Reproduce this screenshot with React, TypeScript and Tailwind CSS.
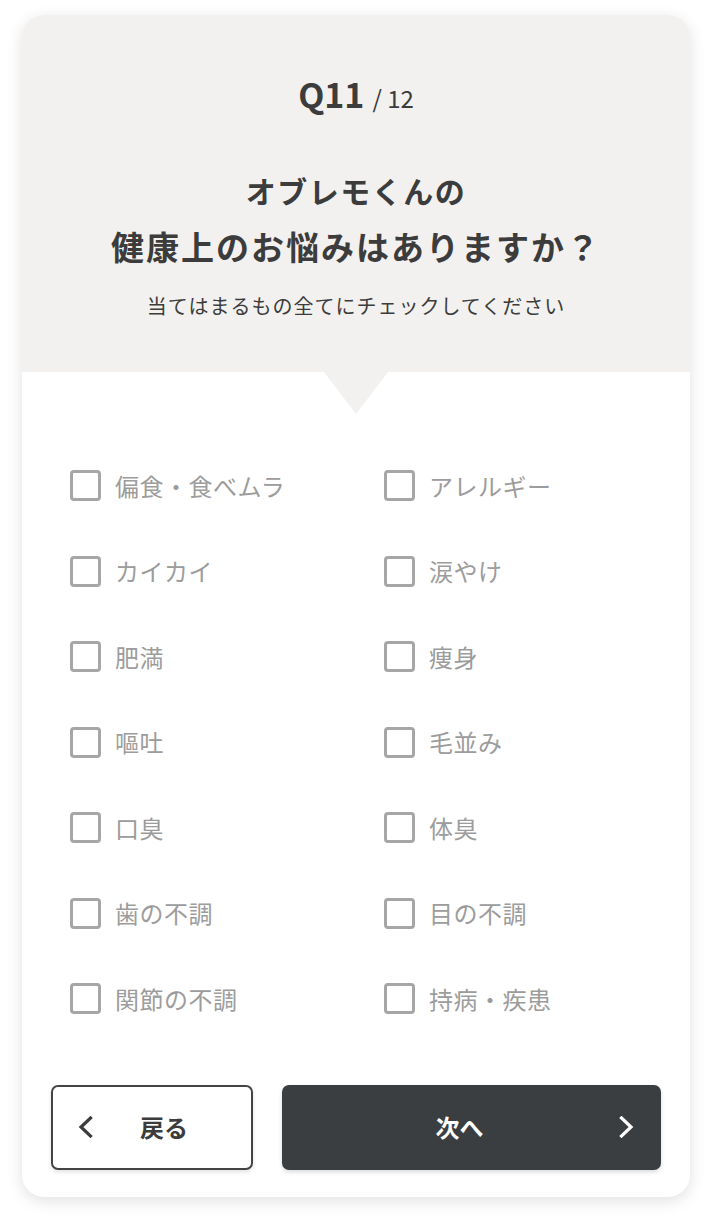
const options = [
  ["偏食・食べムラ", "アレルギー"],
  ["カイカイ", "涙やけ"],
  ["肥満", "痩身"],
  ["嘔吐", "毛並み"],
  ["口臭", "体臭"],
  ["歯の不調", "目の不調"],
  ["関節の不調", "持病・疾患"],
];

const font = { fontFamily: '"Noto Sans CJK JP", "Noto Sans", sans-serif' };

const Chevron = ({ dir }: { dir: "left" | "right" }) => (
  <svg width="15" height="22" viewBox="0 0 15 22" fill="none" className="shrink-0">
    <polyline
      points={dir === "left" ? "12.5,2 3,11 12.5,20" : "2.5,2 12,11 2.5,20"}
      stroke="currentColor"
      strokeWidth="3.2"
      strokeLinecap="square"
    />
  </svg>
);

const Check = ({ label }: { label: string }) => (
  <label className="flex items-center gap-[14px] h-[85.5px] cursor-pointer">
    <span className="w-[31px] h-[31px] border-[3px] border-[#a6a6a6] rounded-[4px] bg-white shrink-0" />
    <span className="text-[24px] text-[#9c9c9c] tracking-[0.5px]">{label}</span>
  </label>
);

export default function App() {
  return (
    <div className="min-h-[1224px] bg-white pt-[15px] px-[22px]" style={font}>
      <div className="w-[668px] rounded-[22px] bg-white shadow-[0_4px_16px_rgba(0,0,0,0.12)] overflow-hidden">
        <div className="relative bg-[#f2f1f0] pt-[57px] pb-[52px] text-center text-[#3c3c3c]">
          <div className="flex items-baseline justify-center gap-[8px]">
            <span className="text-[34px] font-bold leading-[44px]">Q11</span>
            <span className="text-[24px]">/ 12</span>
          </div>
          <h1 className="mt-[46px] font-bold leading-[56px]">
            <span className="block text-[30px] tracking-[1.5px]">オブレモくんの</span>
            <span className="block text-[33px] tracking-[2px]">健康上のお悩みはありますか？</span>
          </h1>
          <p className="mt-[18px] text-[20px] leading-[28px] tracking-[1px]">
            当てはまるもの全てにチェックしてください
          </p>
          <div className="absolute left-1/2 -translate-x-1/2 top-full w-0 h-0 border-l-[32px] border-r-[32px] border-t-[42px] border-l-transparent border-r-transparent border-t-[#f2f1f0]" />
        </div>

        <div className="pt-[71px] pl-[48px] grid grid-cols-[314px_1fr]">
          {options.map(([a, b]) => (
            <div key={a} className="contents">
              <Check label={a} />
              <Check label={b} />
            </div>
          ))}
        </div>

        <div className="flex gap-[29px] px-[29px] pt-[43px] pb-[27px]">
          <button className="w-[202px] h-[85px] rounded-[7px] border-2 border-[#444] bg-white flex items-center pl-[25px] pr-[22px] text-[#3c3c3c] shadow-[0_2px_4px_rgba(0,0,0,0.12)]">
            <Chevron dir="left" />
            <span className="flex-1 text-center text-[24px] font-bold pl-[6px]">戻る</span>
          </button>
          <button className="flex-1 h-[85px] rounded-[7px] bg-[#3b3e41] flex items-center pl-[22px] pr-[27px] text-white shadow-[0_2px_4px_rgba(0,0,0,0.15)]">
            <span className="flex-1 text-center text-[24px] font-bold pr-[4px]">次へ</span>
            <Chevron dir="right" />
          </button>
        </div>
      </div>
    </div>
  );
}
